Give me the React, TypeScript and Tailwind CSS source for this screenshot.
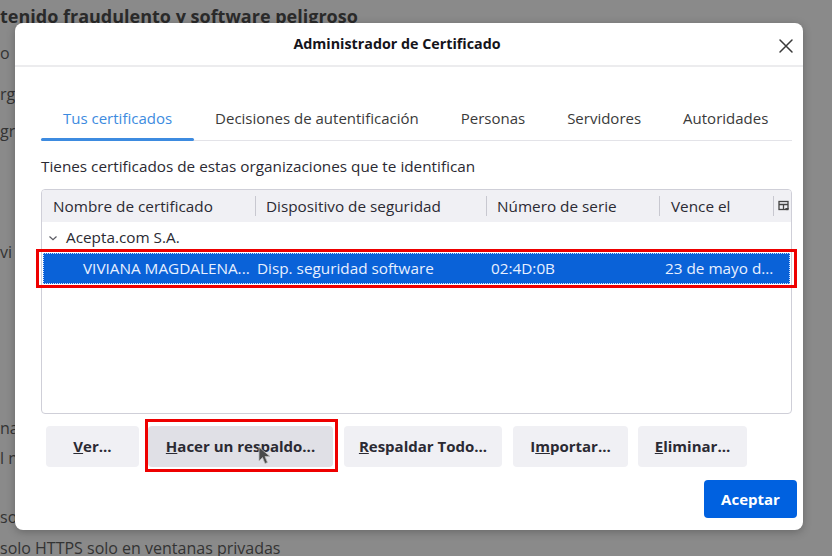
import React from "react";

const font = { fontFamily: '"Open Sans", "Noto Sans", sans-serif' };

function Btn({ w, children, hover }: { w: string; children: React.ReactNode; hover?: boolean }) {
  return (
    <div
      className={`${w} h-[41px] rounded-[4px] flex items-center justify-center text-[15px] font-bold text-[#2b2a33] ${
        hover ? "bg-[#e0e0e6]" : "bg-[#f0f0f4]"
      }`}
    >
      {children}
    </div>
  );
}

export default function App() {
  const tabs = ["Decisiones de autentificación", "Personas", "Servidores", "Autoridades"];
  return (
    <div className="relative w-[832px] h-[556px] overflow-hidden bg-[#8a8a8a]" style={font}>
      {/* dimmed page behind the dialog */}
      <div className="flex flex-col text-[16px] leading-[22px] text-[#333333] whitespace-nowrap">
        <div className="mt-[5px] text-[18px] font-bold text-[#2a2a2a]">tenido fraudulento y software peligroso</div>
        <div className="mt-[15px]">o</div>
        <div className="mt-[19px]">rg</div>
        <div className="mt-[15px]">gr</div>
        <div className="mt-[99px]">vi</div>
        <div className="mt-[154px]">na</div>
        <div className="mt-[8px]">l n</div>
        <div className="mt-[37px]">so</div>
        <div className="mt-[9px]">solo HTTPS solo en ventanas privadas</div>
      </div>

      {/* dialog */}
      <div className="absolute left-[15px] top-[23px] w-[788px] h-[507px] bg-white rounded-[8px] shadow-[0_2px_8px_rgba(0,0,0,0.25)] flex flex-col">
        <div className="relative h-[44px] flex items-center justify-center pr-[24px] border-b-2 border-[#ececee]">
          <div className="text-[14.3px] font-bold text-[#15141a]">Administrador de Certificado</div>
          <svg className="absolute right-[9px] top-[15px]" width="16" height="16" viewBox="0 0 16 16">
            <path d="M2 2 L14 14 M14 2 L2 14" stroke="#3a3a3a" strokeWidth="1.5" strokeLinecap="round" />
          </svg>
        </div>

        <div className="flex flex-col pl-[26px] pr-[11px]">
          {/* tabs */}
          <div className="mt-[30px] flex h-[44px] border-b border-[#e3e3e8] text-[15px] text-[#3a3a3a]">
            <div className="relative px-[22px] flex items-center text-[#3d8be0]">
              Tus certificados
              <div className="absolute left-0 right-0 bottom-[-1px] h-[3px] rounded-full bg-[#3d8be0]" />
            </div>
            {tabs.map((t) => (
              <div key={t} className="px-[21px] flex items-center">
                {t}
              </div>
            ))}
          </div>

          <div className="mt-[15px] text-[15.3px] leading-[20px] text-[#2b2a33]">
            Tienes certificados de estas organizaciones que te identifican
          </div>

          {/* tree table */}
          <div className="mt-[13px] h-[225px] border border-[#cfcfd8] rounded-[4px] flex flex-col text-[15.3px] text-[#2b2a33] overflow-hidden">
            <div className="h-[32px] bg-[#f0f0f4] flex items-center shrink-0">
              <div className="w-[213px] pl-[11px] whitespace-nowrap">Nombre de certificado</div>
              <div className="w-px h-[20px] bg-[#c8c8d0]" />
              <div className="w-[230px] pl-[10px] whitespace-nowrap">Dispositivo de seguridad</div>
              <div className="w-px h-[20px] bg-[#c8c8d0]" />
              <div className="w-[172px] pl-[10px] whitespace-nowrap">Número de serie</div>
              <div className="w-px h-[20px] bg-[#c8c8d0]" />
              <div className="w-[113px] pl-[11px] whitespace-nowrap">Vence el</div>
              <div className="w-px h-[20px] bg-[#c8c8d0]" />
              <svg className="ml-[4px]" width="12" height="12" viewBox="0 0 12 12">
                <rect x="1" y="1.5" width="9" height="8" fill="none" stroke="#444" strokeWidth="1.3" />
                <path d="M1 4.5 H10 M5.5 4.5 V9.5" stroke="#444" strokeWidth="1.3" />
                <path d="M7 8 L11 8 L9 10.5 Z" fill="#444" />
              </svg>
            </div>
            <div className="h-[31px] flex items-center pl-[6px]">
              <svg width="10" height="10" viewBox="0 0 10 10" className="mr-[8px]">
                <path d="M1.5 3.5 L5 6.8 L8.5 3.5" fill="none" stroke="#5a5a62" strokeWidth="1.2" />
              </svg>
              Acepta.com S.A.
            </div>
            <div className="h-[31px] mx-[1px] bg-[#0a62d8] border border-dotted border-[#cfe0ff] flex items-center text-[#e8f0ff]">
              <div className="w-[213px] pl-[39px] whitespace-nowrap">VIVIANA MAGDALENA...</div>
              <div className="w-[232px] whitespace-nowrap">Disp. seguridad software</div>
              <div className="w-[173px] pl-[2px] whitespace-nowrap">02:4D:0B</div>
              <div className="pl-[3px] whitespace-nowrap">23 de mayo d...</div>
            </div>
          </div>

          {/* buttons */}
          <div className="mt-[12px] flex pl-[5px]">
            <Btn w="w-[93px]">
              <span>
                <u>V</u>er...
              </span>
            </Btn>
            <div className="ml-[9px]">
              <Btn w="w-[185px]" hover>
                <span>
                  <u>H</u>acer un respaldo...
                </span>
              </Btn>
            </div>
            <div className="ml-[11px]">
              <Btn w="w-[158px]">
                <span>
                  <u>R</u>espaldar Todo...
                </span>
              </Btn>
            </div>
            <div className="ml-[11px]">
              <Btn w="w-[115px]">
                <span>
                  I<u>m</u>portar...
                </span>
              </Btn>
            </div>
            <div className="ml-[10px]">
              <Btn w="w-[109px]">
                <span>
                  <u>E</u>liminar...
                </span>
              </Btn>
            </div>
          </div>

          <div className="mt-[13px] flex justify-end mr-[-5px]">
            <div className="w-[93px] h-[38px] rounded-[4px] bg-[#0061e0] flex items-center justify-center text-white text-[15px] font-bold">
              Aceptar
            </div>
          </div>
        </div>
      </div>

      {/* red annotation boxes */}
      <div className="absolute left-[36px] top-[249px] w-[761px] h-[39px] border-[3px] border-[#ee0000]" />
      <div className="absolute left-[145px] top-[419px] w-[193px] h-[53px] border-[3px] border-[#ee0000]" />

      {/* mouse cursor */}
      <svg className="absolute left-[258px] top-[446px]" width="14" height="20" viewBox="0 0 14 20">
        <path d="M1 1 L1 15 L4.5 11.5 L7 17.5 L9.5 16.5 L7 10.5 L12 10.5 Z" fill="#4a4a4a" stroke="#bdbdbd" strokeWidth="0.8" />
      </svg>
    </div>
  );
}
